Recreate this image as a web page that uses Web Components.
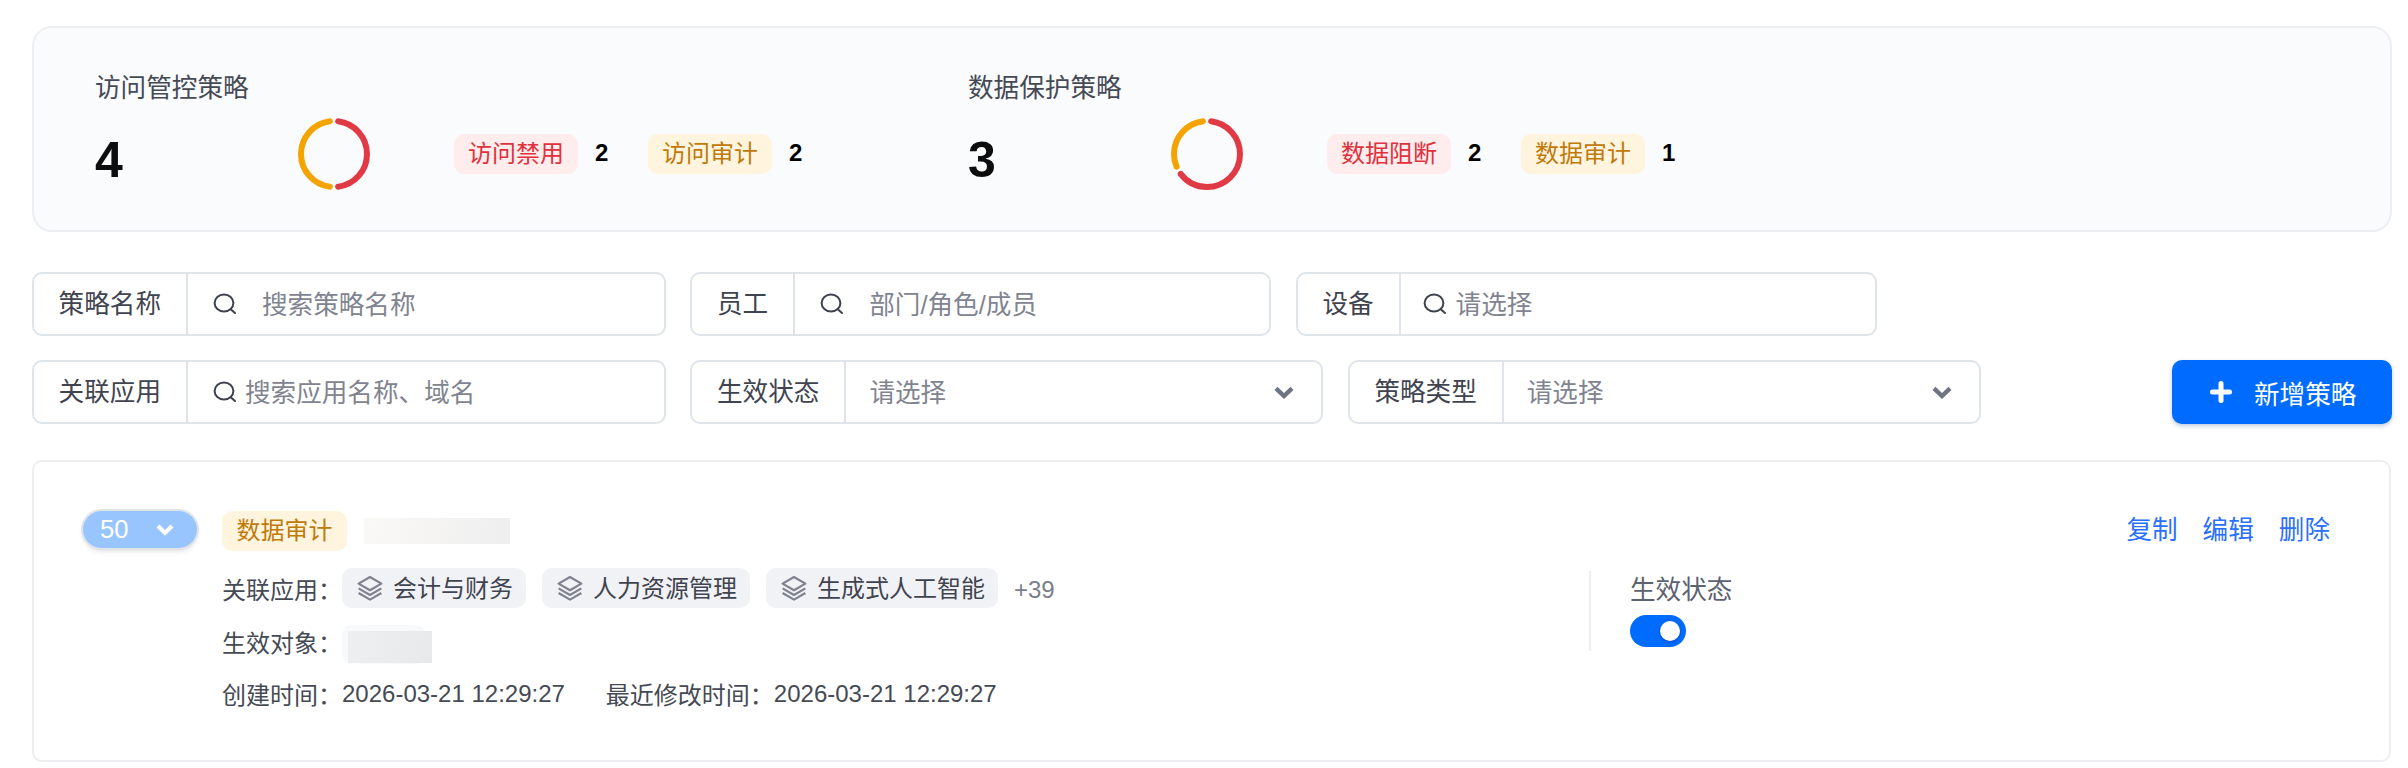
<!DOCTYPE html>
<html lang="zh">
<head>
<meta charset="utf-8">
<title>策略</title>
<style>
  html, body { margin: 0; background: #fff; }
  body { font-family: "Liberation Sans", "Noto Sans CJK SC", sans-serif; }
</style>
</head>
<body>
<policy-page>
  <summary-panel>
    <policy-stat name="访问管控策略" count="4" red="50">
      <stat-tag tone="red" count="2">访问禁用</stat-tag>
      <stat-tag tone="amber" count="2">访问审计</stat-tag>
    </policy-stat>
    <policy-stat name="数据保护策略" count="3" red="66.7">
      <stat-tag tone="red" count="2">数据阻断</stat-tag>
      <stat-tag tone="amber" count="1">数据审计</stat-tag>
    </policy-stat>
  </summary-panel>

  <filter-bar>
    <filter-row>
      <filter-field label="策略名称" placeholder="搜索策略名称" icon="search" style="width:634px;--icon-gap:25px"></filter-field>
      <filter-field label="员工" placeholder="部门/角色/成员" icon="search" style="width:581px;--icon-gap:25px"></filter-field>
      <filter-field label="设备" placeholder="请选择" icon="search" style="width:581px;--icon-pad:22px;--icon-gap:9px"></filter-field>
    </filter-row>
    <filter-row>
      <filter-field label="关联应用" placeholder="搜索应用名称、域名" icon="search" style="width:634px;--icon-gap:8px"></filter-field>
      <filter-field label="生效状态" placeholder="请选择" icon="chevron" style="width:633px"></filter-field>
      <filter-field label="策略类型" placeholder="请选择" icon="chevron" style="width:633px"></filter-field>
      <add-button>新增策略</add-button>
    </filter-row>
  </filter-bar>

  <policy-card priority="50" type="数据审计">
    <detail-line label="关联应用：" class="apps">
      <app-chip>会计与财务</app-chip>
      <app-chip>人力资源管理</app-chip>
      <app-chip>生成式人工智能</app-chip>
      <more-count>+39</more-count>
    </detail-line>
    <detail-line label="生效对象：" class="target"><masked-chip></masked-chip></detail-line>
    <detail-line label="创建时间：" value="2026-03-21 12:29:27" label2="最近修改时间：" value2="2026-03-21 12:29:27"></detail-line>
  </policy-card>
</policy-page>

<script>
const define = (name, css, html) => {
  customElements.define(name, class extends HTMLElement {
    constructor() {
      super();
      this.attachShadow({ mode: "open" });
    }
    connectedCallback() {
      const body = typeof html === "function" ? html(this) : html;
      this.shadowRoot.innerHTML = `<style>${css}</style>${body}`;
    }
  });
};

const searchIcon = `<svg width="24" height="22" viewBox="0 0 24 22" fill="none" stroke="#3d424d" stroke-width="2" stroke-linecap="round"><ellipse cx="11" cy="10" rx="9.4" ry="8.6"/><path d="M18 16.4 22 20"/></svg>`;
const chevronIcon = `<svg width="20" height="13" viewBox="0 0 20 13" fill="none" stroke="#6f7482" stroke-width="4.4"><path d="M2 2.4 10 10 18 2.4"/></svg>`;
const layersIcon = `<svg width="26" height="26" viewBox="0 0 26 26" fill="none" stroke="#7f838f" stroke-width="2.2" stroke-linejoin="round"><path d="M13 2 24.4 8.6 13 15.2 1.6 8.6Z"/><path d="M1.6 13.4 13 20 24.4 13.4"/><path d="M1.6 18 13 24.6 24.4 18"/></svg>`;

define("policy-page", `:host{display:block;padding:26px 16px 0 32px;box-sizing:border-box;width:2408px;height:768px;overflow:hidden}`, `<slot></slot>`);

define("summary-panel", `:host{display:flex;height:206px;box-sizing:border-box;width:2360px;padding:43px 0 0 61px;background:#fafbfd;border:2px solid #eceef2;border-radius:20px}`, `<slot></slot>`);

define("policy-stat", `
  :host{display:block;width:873px;flex:none}
  .name{font-size:25.6px;line-height:34px;color:#454a55}
  .row{display:flex;align-items:center;height:72px;margin-top:13px}
  .num{width:203px;font-size:50px;font-weight:700;line-height:72px;color:#0d0d0d;padding-top:6px;box-sizing:border-box;height:72px}
  svg{display:block;margin-right:84px}
  .tags{display:flex;gap:40px}
`, el => {
  const red = parseFloat(el.getAttribute("red"));
  const amber = 100 - red;
  return `<div class="name">${el.getAttribute("name")}</div>
  <div class="row">
    <div class="num">${el.getAttribute("count")}</div>
    <svg width="72" height="72" viewBox="0 0 72 72" fill="none" stroke-width="6" stroke-linecap="round">
      <g transform="rotate(-90 36 36)">
        <circle cx="36" cy="36" r="33" pathLength="100" stroke="#e03a45" stroke-dasharray="${red - 4} ${100 - red + 4}" stroke-dashoffset="-2"/>
        <circle cx="36" cy="36" r="33" pathLength="100" stroke="#f5a300" stroke-dasharray="${amber - 4} ${100 - amber + 4}" stroke-dashoffset="${-(red + 2)}"/>
      </g>
    </svg>
    <div class="tags"><slot></slot></div>
  </div>`;
});

define("stat-tag", `
  :host{display:flex;align-items:center;gap:17px;font-size:24px}
  .tag{height:40px;line-height:40px;padding:0 14px;border-radius:10px}
  :host([tone=red]) .tag{background:#ffeced;color:#e0313c}
  :host([tone=amber]) .tag{background:#fff4dd;color:#bf7a0a}
  .n{font-weight:700;color:#000;font-size:24px;width:13px;margin-top:-2px}
`, el => `<span class="tag"><slot></slot></span><span class="n">${el.getAttribute("count")}</span>`);

define("filter-bar", `:host{display:flex;flex-direction:column;gap:24px;margin-top:40px;width:2360px}`, `<slot></slot>`);
define("filter-row", `:host{display:flex;gap:24.4px;align-items:stretch}`, `<slot></slot>`);

define("filter-field", `
  :host{display:flex;height:64px;box-sizing:border-box;background:#fff;border:2px solid #dfe3ea;border-radius:10px;font-size:25.6px;flex:none}
  .label{padding:0 25px 0 24.6px;line-height:60px;color:#3f4450;border-right:2px solid #dfe3ea;white-space:nowrap}
  .input{flex:1;display:flex;align-items:center;padding:0 0 0 var(--icon-pad,25px);color:#7f8490;min-width:0}
  .input.select{padding:0 27px 0 23px;justify-content:space-between}
  .ph{white-space:nowrap;margin-top:-3px}
  svg{display:block;flex:none}
  .search{margin-right:var(--icon-gap,26px)}
`, el => {
  const select = el.getAttribute("icon") === "chevron";
  const label = el.getAttribute("label");
  const ph = el.getAttribute("placeholder");
  return `<div class="label">${label}</div>
    <div class="input ${select ? "select" : ""}">
      ${select ? "" : `<span class="search">${searchIcon}</span>`}
      <span class="ph">${ph}</span>
      ${select ? chevronIcon : ""}
    </div>`;
});

define("add-button", `
  :host{display:flex;align-items:center;margin-left:auto;width:220px;height:64px;box-sizing:border-box;padding-left:38px;gap:22px;background:#006cff;color:#fff;border-radius:10px;font-size:25.6px;box-shadow:0 2px 4px rgba(0,40,120,.25)}
  svg{display:block;flex:none}
`, `<svg width="22" height="22" viewBox="0 0 22 22" fill="none" stroke="#fff" stroke-width="5" stroke-linecap="round"><path d="M11 2.5v17M2.5 11h17"/></svg><span><slot></slot></span>`);

define("policy-card", `
  :host{display:flex;gap:25px;margin-top:36px;width:2359px;height:302px;box-sizing:border-box;padding:49px 59px 0 49px;background:#fff;border:2px solid #eceef2;border-radius:10px}
  .pill{display:flex;align-items:center;justify-content:space-between;width:114px;height:37px;box-sizing:border-box;padding:0 23px 0 17px;background:#99c5ff;color:#fff;border-radius:19px;font-size:25.6px;flex:none;box-shadow:0 0 0 2px #dfe3ea,0 3px 5px rgba(0,0,0,.14)}
  .main{flex:1;min-width:0}
  .head{display:flex;align-items:center;height:40px}
  .type{height:40px;line-height:40px;padding:0 14.5px;border-radius:10px;background:#fff4dd;color:#bf7a0a;font-size:24px}
  .mask{width:146px;height:26px;margin-left:17px;background:linear-gradient(100deg,#fbf9f6,#eeeeef)}
  .acts{display:flex;gap:25px;margin-left:auto;font-size:25.6px;color:#2a6fff;margin-top:-8px}
  .body{display:flex;align-items:flex-start;margin-top:17px}
  .lines{flex:1;min-width:0}
  .status{width:741px;height:80px;margin-top:3px;box-sizing:border-box;border-left:2px solid #eceef2;padding:3px 0 0 39px}
  .status .t{font-size:25.6px;line-height:32px;color:#5c6270}
  .switch{position:relative;width:56px;height:32px;margin-top:9px;background:#006cff;border-radius:16px}
  .knob{position:absolute;right:6px;top:6px;width:20px;height:20px;background:#fff;border-radius:50%;box-shadow:0 1px 3px rgba(0,0,60,.35)}
`, el => `
  <div class="pill"><span>${el.getAttribute("priority")}</span>
    <svg width="18" height="12" viewBox="0 0 18 12" fill="none" stroke="#fff" stroke-width="4"><path d="M2 2 9 9 16 2"/></svg></div>
  <div class="main">
    <div class="head">
      <span class="type">${el.getAttribute("type")}</span>
      <span class="mask"></span>
      <div class="acts"><span>复制</span><span>编辑</span><span>删除</span></div>
    </div>
    <div class="body">
      <div class="lines"><slot></slot></div>
      <div class="status"><div class="t">生效状态</div><div class="switch"><div class="knob"></div></div></div>
    </div>
  </div>`);

define("detail-line", `
  :host{display:flex;align-items:center;min-height:40px;font-size:24px;color:#454a55;margin-bottom:12px;white-space:nowrap}
  :host(.apps){margin-bottom:16px}
  :host([value]){min-height:34px;margin-bottom:0}
  :host(.target) .label{margin-top:-5px}
  .label{width:120px;flex:none}
  .items{display:flex;align-items:center;gap:16px}
  .v2{margin-left:41px;width:168px;flex:none}
`, el => {
  const value = el.getAttribute("value");
  const rest = value ? `<span>${value}</span><span class="v2">${el.getAttribute("label2")}</span><span>${el.getAttribute("value2")}</span>` : `<div class="items"><slot></slot></div>`;
  return `<span class="label">${el.getAttribute("label")}</span>${rest}`;
});

define("app-chip", `
  :host{display:flex;align-items:center;gap:10px;height:40px;padding:0 13px 0 15px;border-radius:10px;background:#f1f2f5;color:#3f4450;font-size:24px}
  svg{display:block;flex:none}
  span{margin-top:-4px}
`, `${layersIcon}<span><slot></slot></span>`);

define("more-count", `:host{display:block;font-size:24px;color:#7b7f8b;margin-top:4px}`, `<slot></slot>`);

define("masked-chip", `
  :host{display:block;position:relative;width:84px;height:39px;border-radius:10px;background:#f8f9fa}
  .blur{position:absolute;left:6px;top:6px;width:84px;height:32px;background:linear-gradient(100deg,#eeeff0,#e8e9eb)}
`, `<div class="blur"></div>`);
</script>
</body>
</html>
